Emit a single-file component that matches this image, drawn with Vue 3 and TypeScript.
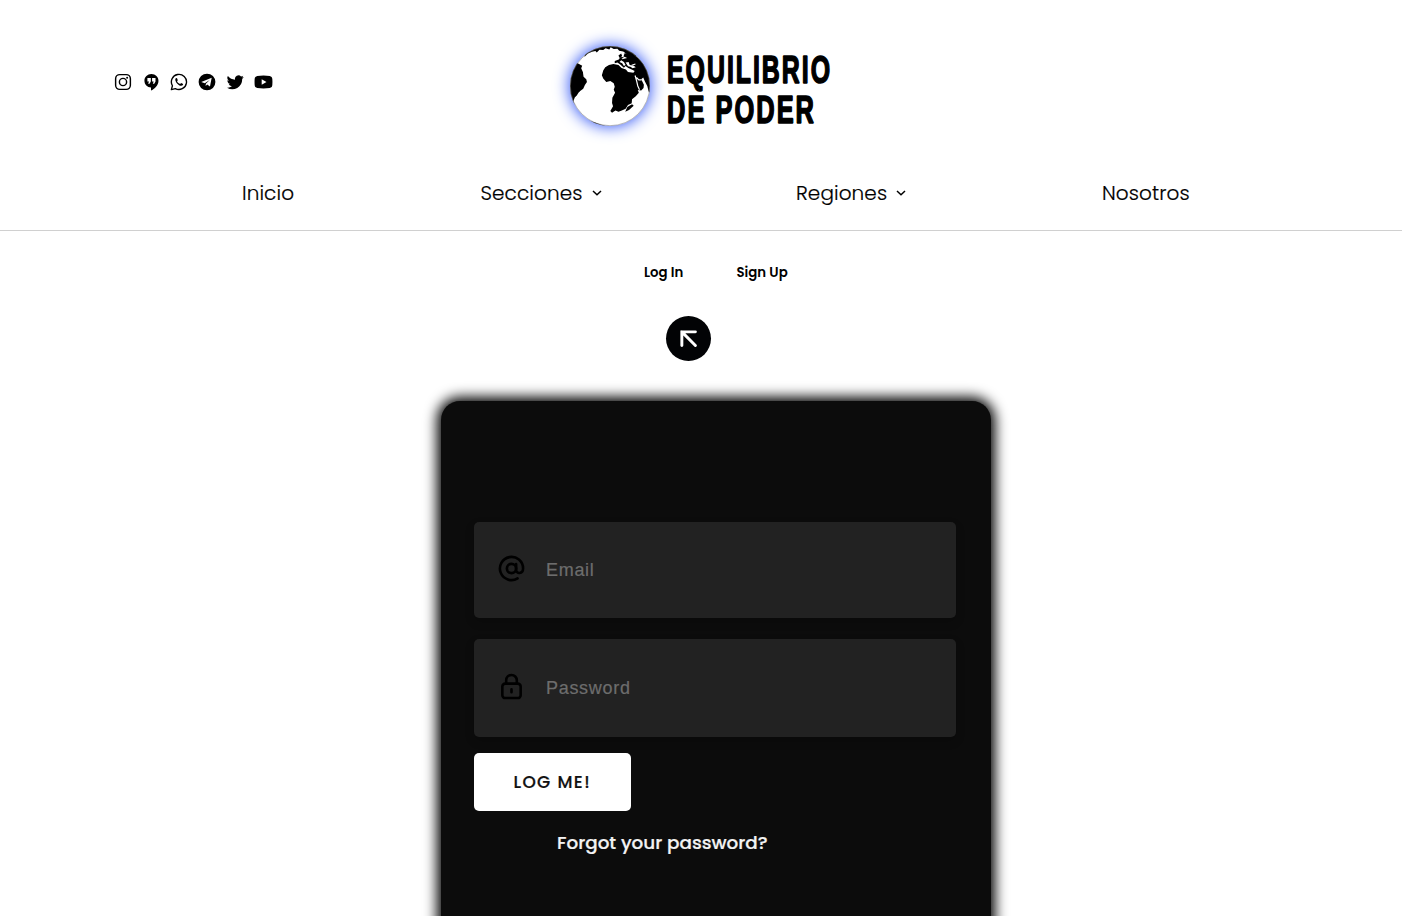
<script setup lang="ts">
interface NavItem {
  id: string
  label: string
  menu: boolean
}

interface Field {
  id: string
  type: string
  placeholder: string
}

const navItems: NavItem[] = [
  { id: 'inicio', label: 'Inicio', menu: false },
  { id: 'secciones', label: 'Secciones', menu: true },
  { id: 'regiones', label: 'Regiones', menu: true },
  { id: 'nosotros', label: 'Nosotros', menu: false },
]

const fields: Field[] = [
  { id: 'email', type: 'email', placeholder: 'Email' },
  { id: 'password', type: 'password', placeholder: 'Password' },
]
</script>

<template>
  <div class="page">
    <header class="header">
      <div class="top">
        <div class="social">
          <svg viewBox="0 0 20 20" class="ico">
            <rect x="1.8" y="1.8" width="16.4" height="16.4" rx="4.6" fill="none" stroke="#000" stroke-width="1.6" />
            <circle cx="10" cy="10" r="4" fill="none" stroke="#000" stroke-width="1.6" />
            <circle cx="14.6" cy="5.4" r="1.1" />
          </svg>
          <svg viewBox="0 0 20 20" class="ico">
            <path d="M10.500 1C6 1 2.700 4.300 2.700 8.500S6 15.900 10 16V19.500C14 17.500 18.300 13.500 18.300 8.500 18.300 4.300 15 1 10.500 1Z" />
            <path d="M6 5.500H9.800V9.500L8.400 12H6.800L7.800 9.500H6ZM11.200 5.500H15V9.500L13.600 12H12L13 9.500H11.200Z" fill="#fff" />
          </svg>
          <svg viewBox="0 0 20 20" class="ico">
            <path d="M1.500 18.500 2.700 14.200A8.400 8.400 0 1 1 5.900 17.300Z" fill="none" stroke="#000" stroke-width="1.5" stroke-linejoin="round" />
            <path d="M7.200 5.500C6.400 5.500 5.700 6.500 5.900 7.700 6.400 10.800 9.400 13.900 12.300 14.200 13.700 14.300 14.600 13.400 14.600 12.300L12.300 11.200 11.300 12.300C9.700 11.700 8.500 10.600 7.800 9.200L8.700 8.100 7.800 5.700Z" />
          </svg>
          <svg viewBox="0 0 20 20" class="ico">
            <circle cx="10" cy="10" r="9.300" />
            <path d="M3.600 9.900 15.200 5.300 13.300 15.100 10.200 12.800 8.500 14.400 8.700 11.900 13 7.900 7.500 11.300Z" fill="#fff" />
          </svg>
          <svg viewBox="0 0 24 24" class="ico bird">
            <path d="M23.600 5a9.600 9.600 0 0 1-2.800.8 4.900 4.900 0 0 0 2.100-2.700c-1 .6-2 1-3.100 1.200a4.900 4.900 0 0 0-8.400 4.500A14 14 0 0 1 1.300 3.600a4.900 4.900 0 0 0 1.500 6.600c-.8 0-1.500-.2-2.200-.6a4.900 4.900 0 0 0 3.900 4.900c-.7.200-1.500.2-2.200.1a4.900 4.900 0 0 0 4.600 3.400A9.900 9.900 0 0 1 0 20a13.900 13.900 0 0 0 21.400-12.400A10 10 0 0 0 23.600 5z" />
          </svg>
          <svg viewBox="0 0 20 20" class="ico wide">
            <path d="M3 3.200Q10 2.200 17 3.200 19.700 3.500 19.800 6.500 20.100 10 19.800 13.500 19.700 16.500 17 16.800 10 17.700 3 16.800.3 16.500.2 13.500-.1 10 .2 6.500.3 3.500 3 3.200Z" />
            <path d="M8 6.900 13.300 10 8 13.100Z" fill="#fff" />
          </svg>
        </div>

        <div class="brand">
          <div class="globe">
            <svg viewBox="47 50 236 236">
              <defs>
                <clipPath id="disc"><circle cx="165" cy="168" r="118" /></clipPath>
              </defs>
              <g clip-path="url(#disc)">
                <path d="M40 100H68L75 104 83 108 80 116 85 127 87 141 95 148 97 156 91 165 86 176 78 182 72 188 67 196 61 202 57 213 60 222 57 232H40Z" />
                <path d="M90 82 100 72 112 67 122 65 126 69 134 61 145 62 152 57 163 60 167 54 176 59 187 58 192 64 204 66 210 71 226 79 250 80 250 40H90Z" />
                <path d="M206 72 223 70 240 78 258 94 274 118 285 145V190L279 184 275 168 268 155 263 143 257 148 265 164 264 174 257 181 247 180 250 188 241 198 230 207 229 219 218 224 211 235 200 240 190 244 181 240 171 247 166 242 174 228 171 218 172 203 180 188 176 179 179 170 176 160 166 153 154 156 145 146 141 136 145 122 151 113 162 106 175 103 190 106 199 115 212 119 218 127 234 129 238 124 229 119 219 115 211 109 206 114 196 105 187 99 179 101 179 94 191 90 195 84 205 81Z" />
                <path d="M216 230 230 222 235 226 221 239 210 244Z" />
                <path d="M80 265 99 269 119 275 139 282 151 284 130 290 90 278Z" />
                <path d="M190 78 198 72 201 80 194 86Z" />
                <path d="M211 99 220 97 223 106 235 108 241 113 232 116 225 111 218 110ZM198 92 206 97 211 106 206 109 201 101 193 97Z" fill="#fff" />
                <path d="M239 137 243 151 247 168 252 179M243 143 250 150 258 150" fill="none" stroke="#fff" stroke-width="3.500" />
                <path d="M207 72 201 81 211 85 200 88M229 107 240 103" fill="none" stroke="#fff" stroke-width="3" />
              </g>
              <circle cx="165" cy="168" r="117" fill="none" stroke="#777" stroke-width="1.5" />
            </svg>
          </div>
          <svg class="wordmark" viewBox="0 0 180 90">
            <text x="1" y="37" textLength="165" lengthAdjust="spacingAndGlyphs">EQUILIBRIO</text>
            <text x="1" y="77" textLength="149" lengthAdjust="spacingAndGlyphs">DE PODER</text>
          </svg>
        </div>
      </div>

      <nav class="nav">
        <a v-for="item in navItems" :key="item.id" :class="['nav-item', item.id]">
          <span>{{ item.label }}</span>
          <svg v-if="item.menu" class="chev" viewBox="0 0 10 6">
            <path d="M1 1 5 4.700 9 1" fill="none" stroke="#000" stroke-width="1.500" />
          </svg>
        </a>
      </nav>
    </header>

    <main class="main">
      <div class="tabs">
        <span class="tab-login">Log In</span>
        <span class="tab-signup">Sign Up</span>
      </div>
      <div class="toggle">
        <svg viewBox="0 0 24 24">
          <path d="M4.200 19V4.200H19M4.200 4.200 19 19" fill="none" stroke="#fff" stroke-width="3.200" stroke-linecap="round" />
        </svg>
      </div>

      <form class="card" @submit.prevent>
        <label v-for="field in fields" :key="field.id" class="field">
          <svg v-if="field.id === 'email'" class="field-icon" viewBox="0 0 28 28">
            <g fill="none" stroke="#000" stroke-width="2.700" stroke-linecap="round">
              <circle cx="14" cy="14" r="4.800" />
              <path d="M18.800 9.500V15.500C18.800 20 26 19.800 26 14A12 12 0 1 0 20.300 24.200" />
            </g>
          </svg>
          <svg v-else class="field-icon" viewBox="0 0 28 28">
            <g fill="none" stroke="#000" stroke-width="2.700" stroke-linecap="round">
              <rect x="4.500" y="11" width="19" height="15" rx="3" />
              <path d="M8.500 11V7.500A5.500 5.500 0 0 1 19.500 7.500V11M14 17V20" />
            </g>
          </svg>
          <input :type="field.type" :placeholder="field.placeholder" />
        </label>
        <button class="submit" type="submit">LOG ME!</button>
        <a class="forgot"><span>Forgot your password?</span></a>
      </form>
    </main>
  </div>
</template>

<style>
html,
body {
  margin: 0;
  overflow: hidden;
}
</style>

<style scoped>
.page {
  height: 916px;
  overflow: hidden;
  background: #fff;
  color: #000;
  font-family: Poppins, Inter, "Liberation Sans", sans-serif;
}
.header {
  height: 230px;
  border-bottom: 1px solid #d0d0d0;
}
.top {
  display: flex;
  height: 172px;
}
.social {
  display: flex;
  align-items: center;
  gap: 10px;
  width: 456px;
  height: 20px;
  padding: 72px 0 0 114px;
}
.ico {
  width: 18px;
  height: 18px;
  flex: none;
}
.ico.bird {
  width: 17px;
  margin: 0 0 0 1px;
}
.ico.wide {
  width: 19px;
}
.brand {
  display: flex;
  padding-top: 46px;
  height: 84px;
}
.globe {
  width: 80px;
  height: 80px;
  border-radius: 50%;
  background: #fff;
  box-shadow: 0 0 15px 1px #3458f5;
}
.globe svg {
  display: block;
  width: 80px;
  height: 80px;
}
.wordmark {
  width: 180px;
  height: 90px;
  margin-left: 16px;
  flex: none;
  overflow: visible;
}
.wordmark text {
  font-family: "Liberation Sans Narrow", "Liberation Sans", sans-serif;
  font-weight: 700;
  font-size: 38px;
  letter-spacing: 3px;
  stroke: #000;
  stroke-width: 1.6px;
  stroke-linejoin: bevel;
}
.nav {
  display: flex;
  height: 42px;
  align-items: center;
  padding-left: 242px;
}
.nav-item {
  display: flex;
  align-items: center;
  font-size: 20px;
  font-weight: 300;
  line-height: 30px;
  letter-spacing: 0.1px;
  white-space: nowrap;
  -webkit-text-stroke: 0.2px #000;
}
.nav-item.inicio {
  width: 238.5px;
}
.nav-item.secciones {
  width: 315.5px;
}
.nav-item.regiones {
  width: 306px;
}
.chev {
  width: 10px;
  height: 6px;
  margin: 0 0 0 9px;
}
.main {
  display: flex;
  flex-direction: column;
}
.tabs {
  display: flex;
  height: 20px;
  margin: 32px 0 0 644px;
  gap: 52.5px;
  font-size: 13.333px;
  font-weight: 600;
  line-height: 20px;
  white-space: nowrap;
}
.tab-login {
  width: 40px;
}
.toggle {
  display: flex;
  align-items: center;
  justify-content: center;
  width: 45px;
  height: 45px;
  margin: 33px 0 0 666px;
  border-radius: 50%;
  background: #020305;
}
.toggle svg {
  width: 22px;
  height: 22px;
}
.card {
  display: flex;
  flex-direction: column;
  align-items: flex-start;
  box-sizing: border-box;
  width: 550px;
  height: 600px;
  margin: 40px 0 0 441px;
  padding: 121px 35px 0 33px;
  border-radius: 19px;
  background: #0c0c0c;
  box-shadow: 0 0 13px 4px #000;
}
.field {
  display: flex;
  align-items: center;
  box-sizing: border-box;
  width: 482px;
  height: 96px;
  padding-left: 24px;
  margin-bottom: 21px;
  border-radius: 5px;
  background: #222;
  box-shadow: 0 4px 10px rgba(0, 0, 0, 0.2);
}
.field + .field {
  height: 98px;
  margin-bottom: 16px;
}
.field-icon {
  width: 27px;
  height: 27px;
  flex: none;
  margin-right: 21px;
  margin-bottom: 3px;
}
.field input {
  width: 350px;
  padding: 0;
  border: 0;
  outline: 0;
  background: transparent;
  font-family: "Liberation Sans", Arial, sans-serif;
  font-size: 18px;
  letter-spacing: 0.7px;
  color: #fff;
}
.field input::placeholder {
  color: #6d6d6d;
  -webkit-text-stroke: 0.2px #6d6d6d;
}
.submit {
  width: 156.5px;
  height: 58px;
  padding: 0;
  border: 0;
  border-radius: 5px;
  background: #fff;
  color: #111;
  font-family: inherit;
  font-size: 17px;
  font-weight: 500;
  letter-spacing: 1.4px;
  -webkit-text-stroke: 0.2px #111;
}
.forgot {
  margin: 17px 0 0 83px;
  color: #f3f3f3;
  font-size: 18.35px;
  font-weight: 500;
  line-height: 30px;
  white-space: nowrap;
  -webkit-text-stroke: 0.2px #f3f3f3;
}
</style>
